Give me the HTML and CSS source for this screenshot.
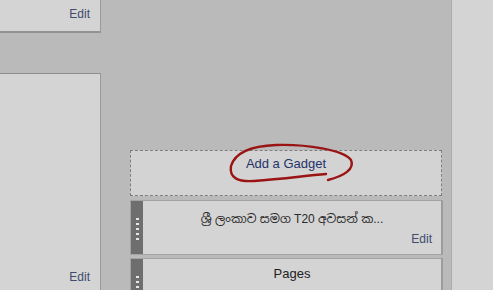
FILE: index.html
```html
<!DOCTYPE html>
<html>
<head>
<meta charset="utf-8">
<link rel="stylesheet" href="styles.css">
</head>
<body>
<div class="page">
  <div class="left">
    <div class="lbox lbox-top"><a class="edit">Edit</a></div>
    <div class="lbox lbox-main"><a class="edit">Edit</a></div>
  </div>
  <div class="main">
    <div class="add-gadget">
      <a class="add-link">Add a Gadget</a>
      <svg class="scribble" width="140" height="50" viewBox="0 0 140 50">
        <path d="M100 37 C116 33 127 26 123 17 C116 7 78 1 48 2 C22 3 7 10 3 23 C1 35 10 39 26 38 C55 36 75 33 98 31" fill="none" stroke="#9a1414" stroke-width="2.4" stroke-linecap="round"/>
      </svg>
    </div>
    <div class="widget widget-one">
      <div class="handle"><span></span><span></span><span></span><span></span><span></span></div>
      <div class="wbody">
        <div class="wtitle sinhala">ශ්‍රී ලංකාව සමග T20 අවසන් ක...</div>
        <div class="wfoot"><a class="edit">Edit</a></div>
      </div>
    </div>
    <div class="widget widget-two">
      <div class="handle"><span></span><span></span><span></span></div>
      <div class="wbody">
        <div class="wtitle pages">Pages</div>
      </div>
    </div>
  </div>
  <div class="right"></div>
</div>
</body>
</html>
```
FILE: styles.css
```css
html, body {
  margin: 0;
  padding: 0;
  height: 290px;
  overflow: hidden;
  background: #bababa;
  font-family: "Liberation Sans", Arial, "Noto Sans Sinhala", sans-serif;
}
.page {
  display: flex;
  height: 290px;
}
.left {
  width: 101px;
  display: flex;
  flex-direction: column;
}
.lbox {
  background: #d4d4d4;
  border-right: 1px solid #9a9a9a;
  display: flex;
  justify-content: flex-end;
  align-items: flex-end;
  padding-right: 10px;
  box-sizing: border-box;
  flex-shrink: 0;
}
.lbox-top {
  height: 33px;
  border-bottom: 2px solid #939393;
  padding-bottom: 10px;
}
.lbox-main {
  margin-top: 40px;
  flex: 1;
  border-top: 1px solid #8e8e8e;
  padding-bottom: 6px;
}
.edit {
  font-size: 12px;
  color: #3e4c6e;
  line-height: 14px;
}
.main {
  width: 312px;
  margin-left: 29px;
  padding-top: 150px;
  display: flex;
  flex-direction: column;
}
.add-gadget {
  position: relative;
  flex-shrink: 0;
  height: 46px;
  box-sizing: border-box;
  border: 1px dashed #7e7e7e;
  background: #d3d3d3;
  display: flex;
  justify-content: center;
  padding-top: 5px;
}
.add-link {
  font-size: 13px;
  line-height: 15px;
  color: #1e346a;
}
.scribble {
  position: absolute;
  left: 97px;
  top: -8px;
}
.widget {
  display: flex;
  flex-shrink: 0;
  border: 1px solid #a3a3a3;
  border-right: 2px solid #9c9c9c;
  background: #d4d4d4;
  margin-right: -1px;
  box-sizing: border-box;
}
.widget-one {
  margin-top: 4px;
  height: 55px;
}
.widget-two {
  margin-top: 3px;
  height: 40px;
}
.handle {
  width: 12px;
  background: #6e6e6e;
  display: flex;
  flex-direction: column;
  align-items: center;
  gap: 3px;
  padding-top: 17px;
  box-sizing: border-box;
}
.handle span {
  width: 3px;
  height: 2px;
  background: #e6e6e6;
}
.wbody {
  flex: 1;
  display: flex;
  flex-direction: column;
}
.wtitle {
  text-align: center;
  font-size: 13px;
  color: #1a1a1a;
  line-height: 16px;
  padding-top: 8px;
}
.sinhala {
  font-size: 12px;
  font-weight: normal;
  color: #2a2a2a;
  padding-top: 10px;
}
.pages {
  padding-top: 7px;
  color: #222;
}
.wfoot {
  display: flex;
  justify-content: flex-end;
  padding-right: 9px;
  margin-top: 5px;
}
.right {
  flex: 1;
  margin-left: 9px;
  border-left: 1px solid #ababab;
  background: #d4d4d4;
}
```
